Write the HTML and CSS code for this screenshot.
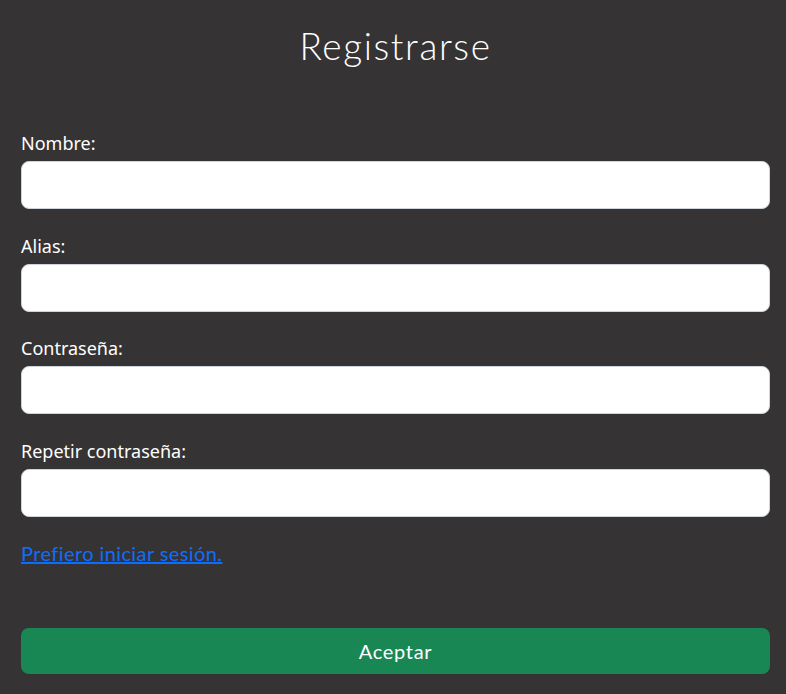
FILE: index.html
```html
<!DOCTYPE html>
<html lang="es">
<head>
<meta charset="utf-8">
<title>Registrarse</title>
<link rel="stylesheet" href="styles.css">
</head>
<body>
<main class="page">
  <h1 class="title">Registrarse</h1>
  <form class="form">
    <div class="field">
      <label class="label" for="nombre">Nombre:</label>
      <input class="input" id="nombre" type="text">
    </div>
    <div class="field">
      <label class="label" for="alias">Alias:</label>
      <input class="input" id="alias" type="text">
    </div>
    <div class="field">
      <label class="label" for="pass">Contraseña:</label>
      <input class="input" id="pass" type="password">
    </div>
    <div class="field">
      <label class="label" for="pass2">Repetir contraseña:</label>
      <input class="input" id="pass2" type="password">
    </div>
    <a class="link" href="#">Prefiero iniciar sesión.</a>
    <button class="button" type="button">Aceptar</button>
  </form>
</main>
</body>
</html>
```
FILE: styles.css
```css
* { box-sizing: border-box; }
html, body { margin: 0; padding: 0; }
body {
  background: #353334;
  color: #ffffff;
  font-family: "Noto Sans", sans-serif;
  height: 694px;
  overflow: hidden;
}
.page {
  padding: 0 16px 0 21px;
}
.title {
  margin: 0;
  padding-top: 24px;
  font-family: "Lato", sans-serif;
  font-weight: 300;
  font-size: 37px;
  line-height: 43px;
  text-align: center;
  letter-spacing: 1.6px;
}
.form {
  display: flex;
  flex-direction: column;
  margin-top: 59px;
}
.field {
  display: flex;
  flex-direction: column;
  margin-bottom: 19.67px;
}
.label {
  font-size: 18px;
  line-height: 27px;
  padding-top: 4px;
  margin-bottom: 4px;
}
.input {
  height: 48px;
  border: 1px solid #ced4da;
  border-radius: 8px;
  background: #ffffff;
  font-size: 20px;
  padding: 8px 16px;
}
.link {
  margin-top: 1px;
  font-family: "Lato", sans-serif;
  font-size: 20px;
  line-height: 30px;
  color: #0d6efd;
  text-decoration: underline;
  letter-spacing: 0.4px;
  align-self: flex-start;
}
.button {
  margin-top: 60px;
  height: 46px;
  border: none;
  border-radius: 8px;
  background: #198754;
  color: #ffffff;
  font-family: "Lato", sans-serif;
  font-size: 20px;
  letter-spacing: 0.7px;
}
```
